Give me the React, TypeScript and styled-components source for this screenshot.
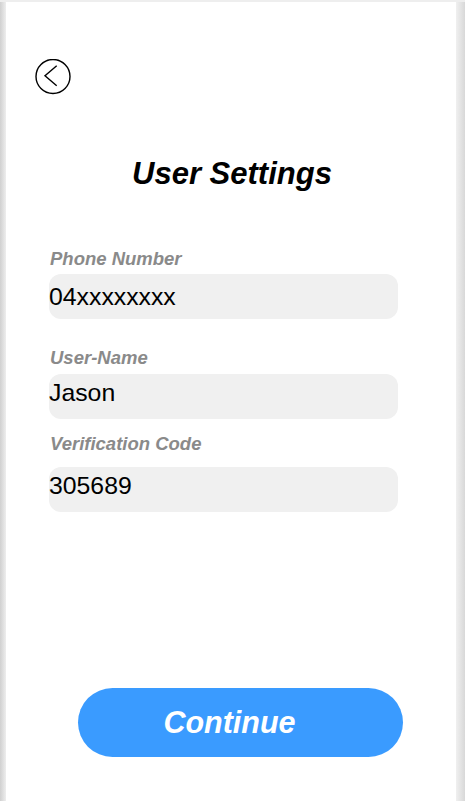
import React from "react";
import styled, { createGlobalStyle } from "styled-components";

const Global = createGlobalStyle`
  html, body {
    margin: 0;
    padding: 0;
    background: #ececec;
    font-family: "Liberation Sans", Arial, sans-serif;
  }
`;

const Screen = styled.div`
  width: 465px;
  height: 801px;
  display: flex;
  flex-direction: column;
  background: linear-gradient(
    to right,
    #d0d0d0 0px,
    #eeeeee 6px,
    #ffffff 6px,
    #ffffff 456px,
    #f0f0f0 456px,
    #d8d8d8 465px
  );
  border-top: 2px solid #eeeeee;
  box-sizing: border-box;
`;

const Panel = styled.div`
  margin: 0 9px 0 6px;
  flex: 1;
  display: flex;
  flex-direction: column;
  background: #ffffff;
  padding: 57px 0 44px;
`;

const BackButton = styled.button`
  margin-left: 29px;
  width: 36px;
  height: 36px;
  padding: 0;
  border: none;
  background: transparent;
  display: block;
  cursor: pointer;
`;

const Title = styled.h1`
  margin: 61px 0 0;
  font-size: 31px;
  line-height: 36px;
  font-weight: 700;
  font-style: italic;
  color: #000;
  text-align: center;
  padding-left: 2px;
`;

const Field = styled.div<{ $gap: number }>`
  margin-top: ${(p) => p.$gap}px;
  padding-left: 43px;
  display: flex;
  flex-direction: column;
`;

const Label = styled.label<{ $gap: number }>`
  font-size: 18.5px;
  line-height: 22px;
  font-weight: 700;
  font-style: italic;
  color: #8a8a8a;
  padding-left: 1px;
  margin-bottom: ${(p) => p.$gap}px;
`;

const Input = styled.div<{ $shift: number }>`
  width: 349px;
  height: 45px;
  box-sizing: border-box;
  background: #f0f0f0;
  border-radius: 12px;
  font-size: 24.8px;
  line-height: 38px;
  padding-top: ${(p) => p.$shift}px;
  color: #000;
`;

const ContinueButton = styled.button`
  margin: auto 0 0 72px;
  width: 325px;
  height: 69px;
  border: none;
  border-radius: 35px;
  background: #3a9bff;
  color: #ffffff;
  font-family: "Liberation Sans", Arial, sans-serif;
  font-size: 30.5px;
  line-height: 69px;
  font-weight: 700;
  font-style: italic;
  padding: 0 22px 0 0;
  cursor: pointer;
`;

const BackIcon = () => (
  <svg width="36" height="36" viewBox="0 0 36 36">
    <circle cx="18" cy="17.5" r="17" fill="none" stroke="#000" strokeWidth="1.4" />
    <polyline
      points="21.7,6.7 10,16.7 21.7,26.7"
      fill="none"
      stroke="#000"
      strokeWidth="1.4"
    />
  </svg>
);

const fields = [
  { label: "Phone Number", value: "04xxxxxxxx", gap: 56, labelGap: 4, shift: 4 },
  { label: "User-Name", value: "Jason", gap: 28, labelGap: 5, shift: 0 },
  { label: "Verification Code", value: "305689", gap: 14, labelGap: 12, shift: 0 },
];

export default function App() {
  return (
    <>
      <Global />
      <Screen>
        <Panel>
          <BackButton aria-label="Back">
            <BackIcon />
          </BackButton>
          <Title>User Settings</Title>
          {fields.map((f) => (
            <Field key={f.label} $gap={f.gap}>
              <Label $gap={f.labelGap}>{f.label}</Label>
              <Input $shift={f.shift}>{f.value}</Input>
            </Field>
          ))}
          <ContinueButton>Continue</ContinueButton>
        </Panel>
      </Screen>
    </>
  );
}
